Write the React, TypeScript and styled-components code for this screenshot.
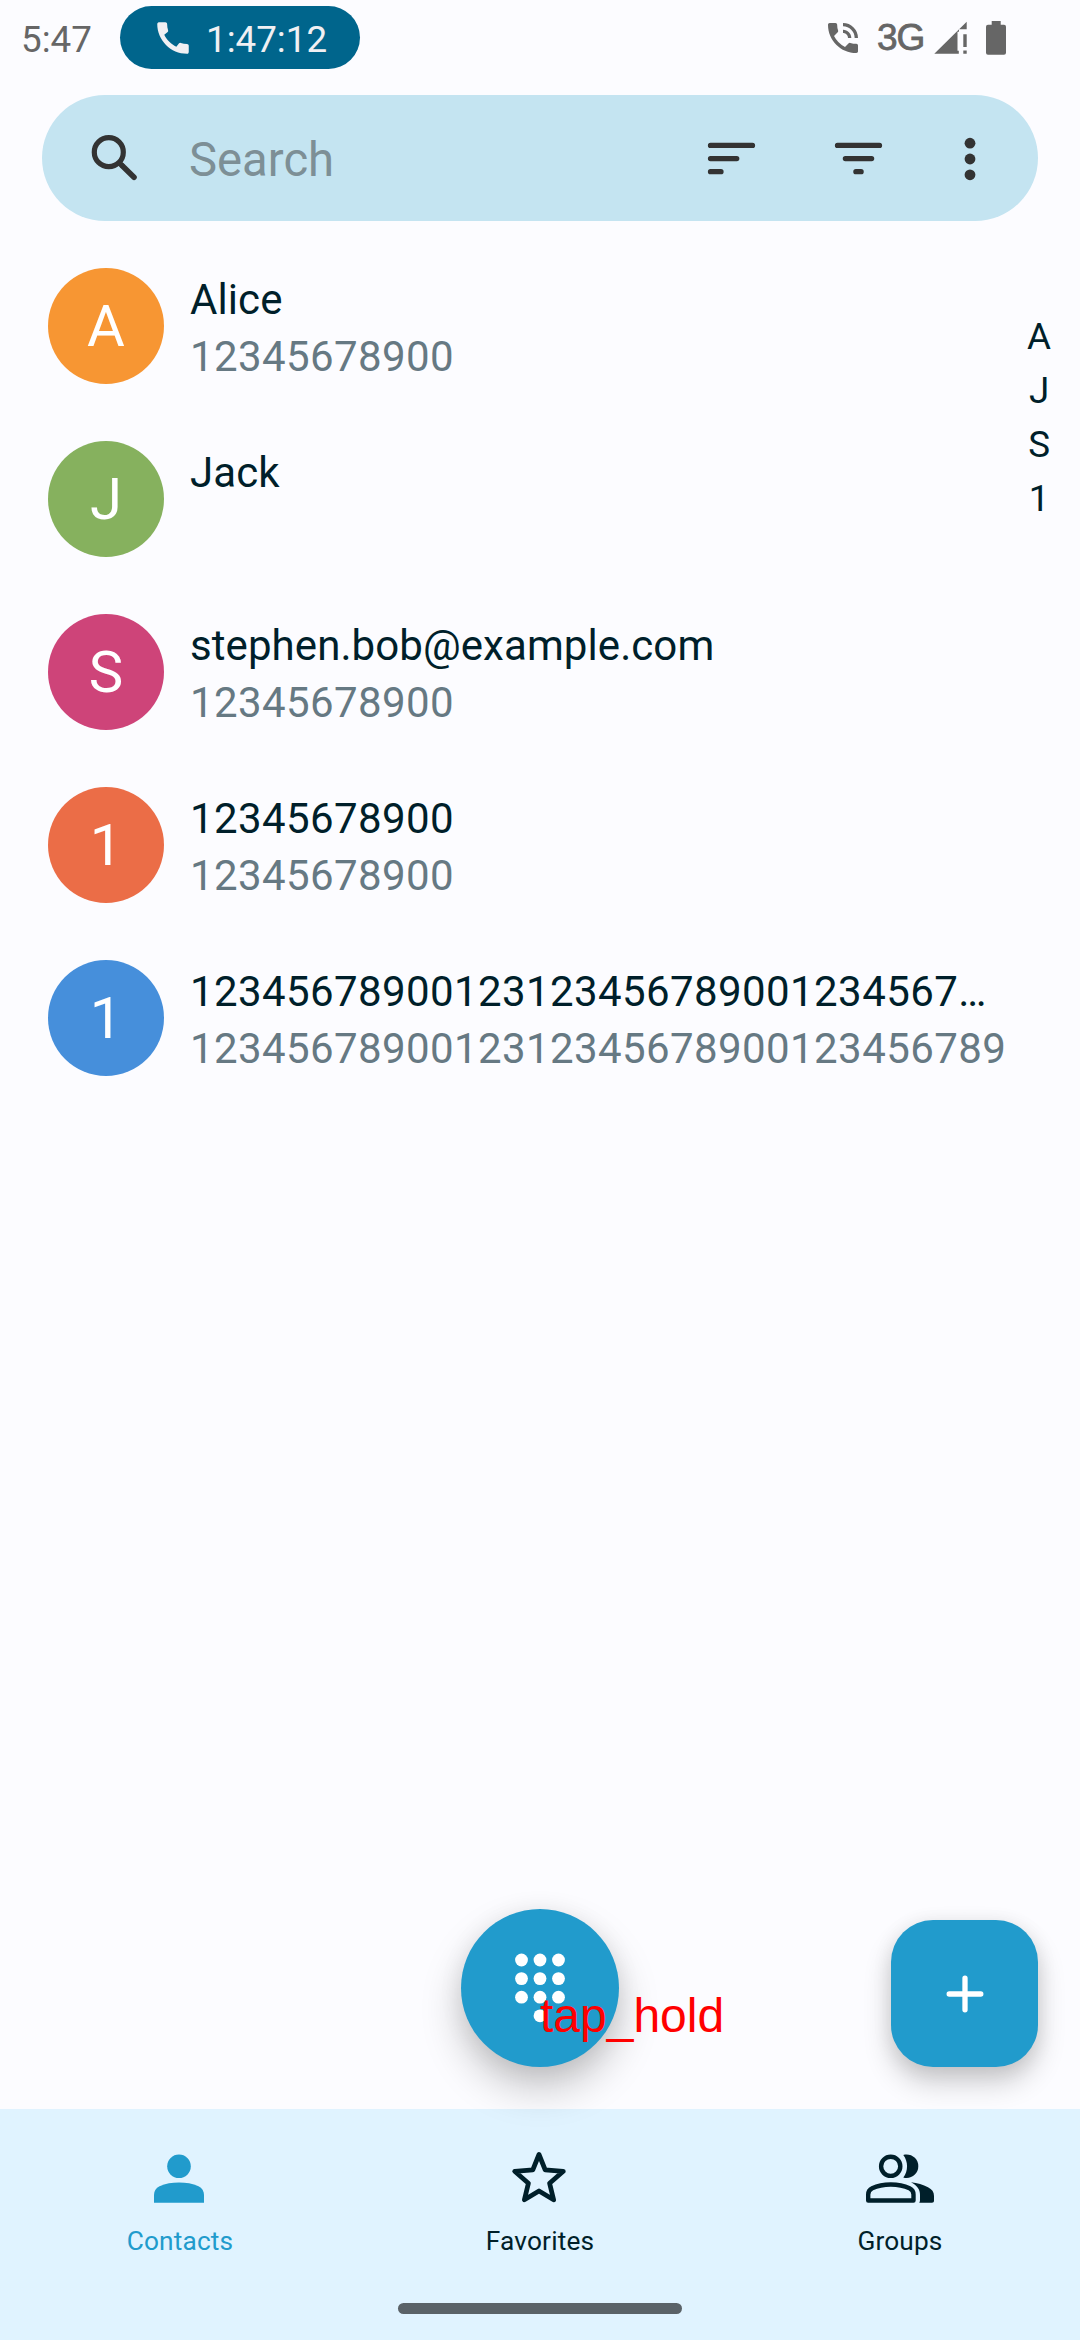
import React from 'react';
import styled, { createGlobalStyle } from 'styled-components';
import { MdCall, MdPhoneInTalk } from 'react-icons/md';

const color = {
  page: '#fcfcff',
  primary: '#219bcc',
  chip: '#00658c',
  search: '#c4e4f1',
  nav: '#e0f3ff',
  text: '#001f2a',
  muted: '#667983',
  icon: '#333333',
  status: '#666666',
};

const GlobalStyle = createGlobalStyle`
  * { box-sizing: border-box; }
  html, body { margin: 0; padding: 0; background: ${color.page}; }
  body { font-family: Roboto, "Noto Sans", sans-serif; color: ${color.text}; }
  svg { display: block; flex: none; }
`;

const Screen = styled.div`
  position: relative;
  width: 1080px;
  height: 2340px;
  overflow: hidden;
  display: flex;
  flex-direction: column;
  background: ${color.page};
`;

const StatusBar = styled.header`
  height: 95px;
  flex: none;
  display: flex;
  align-items: flex-start;
  justify-content: space-between;
  padding: 6px 74px 0 21px;
  color: ${color.status};
  font-size: 36.75px;
  line-height: 63px;
`;

const StatusLeft = styled.div`
  display: flex;
`;

const Clock = styled.span`
  width: 99px;
  padding-top: 2px;
`;

const CallChip = styled.div`
  width: 240px;
  height: 63px;
  border-radius: 32px;
  display: flex;
  align-items: center;
  gap: 12px;
  padding-left: 32px;
  background: ${color.chip};
  color: #f0f0f3;
`;

const ChipTime = styled.span`
  padding-top: 3px;
`;

const StatusRight = styled.div`
  height: 63px;
  display: flex;
  align-items: center;
`;

const NetworkType = styled.span`
  width: 57px;
  margin-left: 14px;
  font-family: "Liberation Sans", Arial, sans-serif;
  font-size: 37px;
  letter-spacing: -1px;
  -webkit-text-stroke: 0.8px ${color.status};
`;

const SignalGroup = styled.div`
  display: flex;
  gap: 18px;
`;

const SearchBar = styled.div`
  height: 126px;
  flex: none;
  margin: 0 42px;
  padding: 0 52px 0 42px;
  border-radius: 63px;
  display: flex;
  align-items: center;
  background: ${color.search};
`;

const SearchHint = styled.span`
  flex: 1;
  padding: 5px 0 0 42px;
  font-size: 47.25px;
  line-height: 63px;
  color: #7d8f96;
`;

const Actions = styled.div`
  display: flex;
  gap: 64px;
`;

const Content = styled.main`
  flex: 1;
  display: flex;
  justify-content: space-between;
  padding-top: 18px;
`;

const ContactList = styled.ul`
  list-style: none;
  margin: 0;
  padding: 0;
`;

const ContactRow = styled.li`
  height: 173px;
  display: flex;
  align-items: flex-start;
  gap: 26px;
  padding: 29px 0 0 48px;
`;

const Avatar = styled.div<{ $tone: string }>`
  width: 116px;
  height: 116px;
  border-radius: 50%;
  background: ${(p) => p.$tone};
  color: #fff;
  font-size: 58px;
  line-height: 116px;
  text-align: center;
`;

const Lines = styled.div`
  display: flex;
  flex-direction: column;
  padding-top: 3px;
  font-size: 42px;
  line-height: 57px;
  letter-spacing: 0.4px;
  white-space: nowrap;
`;

const Name = styled.span<{ $numeric: boolean }>`
  letter-spacing: ${(p) => (p.$numeric ? '0.4px' : '0.08px')};
`;

const Phone = styled.span`
  color: ${color.muted};
`;

const LetterIndex = styled.nav`
  width: 84px;
  padding: 71px 8px 0 0;
  display: flex;
  flex-direction: column;
  font-size: 36.75px;
  line-height: 54px;
  text-align: center;
`;

const BottomNav = styled.nav`
  height: 231px;
  flex: none;
  display: flex;
  flex-direction: column;
  align-items: center;
  justify-content: space-between;
  padding: 39px 0 26px;
  background: ${color.nav};
`;

const Tabs = styled.div`
  width: 100%;
  display: grid;
  grid-template-columns: repeat(3, 1fr);
`;

const Tab = styled.div<{ $active?: boolean }>`
  display: flex;
  flex-direction: column;
  align-items: center;
  gap: 17px;
  font-size: 26.25px;
  line-height: 32px;
  letter-spacing: 0.15px;
  color: ${(p) => (p.$active ? color.primary : color.text)};
`;

const HomeHandle = styled.div`
  width: 284px;
  height: 11px;
  border-radius: 6px;
  background: #5a6268;
`;

const Fab = styled.button`
  position: absolute;
  border: 0;
  padding: 0;
  display: flex;
  align-items: center;
  justify-content: center;
  background: ${color.primary};
  color: #fff;
`;

const DialFab = styled(Fab)`
  left: 461px;
  top: 1909px;
  width: 158px;
  height: 158px;
  border-radius: 50%;
  box-shadow: 0 21px 40px rgba(0, 0, 0, 0.22), 0 4px 24px rgba(0, 0, 0, 0.08);
`;

const AddFab = styled(Fab)`
  right: 42px;
  top: 1920px;
  width: 147px;
  height: 147px;
  border-radius: 42px;
  box-shadow: 0 16px 28px rgba(0, 0, 0, 0.19), 0 3px 20px rgba(0, 0, 0, 0.09);
`;

const GestureLabel = styled.span`
  position: absolute;
  left: 540px;
  top: 1989px;
  font-family: "Liberation Sans", Arial, sans-serif;
  font-size: 48px;
  line-height: 54px;
  color: #ff0000;
`;

const contacts = [
  { initial: 'A', name: 'Alice', phone: '12345678900', tone: '#f79633' },
  { initial: 'J', name: 'Jack', phone: '', tone: '#86b15e' },
  { initial: 'S', name: 'stephen.bob@example.com', phone: '12345678900', tone: '#ce4479' },
  { initial: '1', name: '12345678900', phone: '12345678900', tone: '#eb6d47' },
  {
    initial: '1',
    name: '12345678900123123456789001234567…',
    phone: '1234567890012312345678900123456789',
    tone: '#468fdb',
  },
];

const SignalIcon = () => (
  <svg width="34" height="34" viewBox="0 0 34 34" fill="currentColor">
    <path d="M.3 32.7 32.7.7v7.6H25v2.5h-1.5v19h1.3v2.9z" />
    <path d="M29.3 13.3h3.4V26h-3.4zM29.3 29.5h3.4v3.2h-3.4z" />
  </svg>
);

const BatteryIcon = () => (
  <svg width="20" height="34" viewBox="0 0 20 34" fill="currentColor">
    <path d="M5.7 0h9v3.7H18a2 2 0 0 1 2 2v26a2 2 0 0 1-2 2H2a2 2 0 0 1-2-2v-26a2 2 0 0 1 2-2h3.7z" />
  </svg>
);

const SearchIcon = () => (
  <svg width="63" height="63" viewBox="0 0 63 63" fill="none" stroke={color.icon}>
    <circle cx="24.8" cy="25.2" r="14.5" strokeWidth="5.2" />
    <path d="M38 38.5 50 50.2" strokeWidth="5.6" strokeLinecap="round" />
    <path d="M34.5 35 39 39.5" strokeWidth="5" />
  </svg>
);

const LineIcon = ({ d }: { d: string }) => (
  <svg width="63" height="63" viewBox="0 0 24 24" fill="none" stroke={color.icon} strokeWidth="2" strokeLinecap="round">
    <path d={d} />
  </svg>
);

const MoreIcon = () => (
  <svg width="32" height="63" viewBox="0 0 32 63" fill={color.icon}>
    {[16.2, 32, 47.8].map((cy) => (
      <circle key={cy} cx="16" cy={cy} r="5.4" />
    ))}
  </svg>
);

const DialpadIcon = () => (
  <svg width="52" height="70" viewBox="0 0 52 70" fill="currentColor">
    {[7, 25.6, 44.2].map((cy) =>
      [7.5, 26, 44.5].map((cx) => <circle key={`${cx}-${cy}`} cx={cx} cy={cy} r="6.4" />)
    )}
    <circle cx="26" cy="62.8" r="6.4" />
  </svg>
);

const PlusIcon = () => (
  <svg width="38" height="38" viewBox="0 0 38 38" stroke="currentColor" strokeWidth="5.3" strokeLinecap="round">
    <path d="M19 3.2v31.6M3.2 19h31.6" />
  </svg>
);

const PersonIcon = () => (
  <svg width="70" height="60" viewBox="0 0 70 60" fill="currentColor">
    <circle cx="34" cy="18.3" r="11.8" />
    <path d="M9 54.7V47c0-4 2-7 5.5-8.7 6-2.8 12.5-3.8 19.5-3.8s13.5 1 19.5 3.8C57 40 59 43 59 47v7.7z" />
  </svg>
);

const StarIcon = () => (
  <svg width="70" height="60" viewBox="0 0 70 60" fill="none" stroke="currentColor" strokeWidth="4.8" strokeLinejoin="round">
    <path d="M34 6.5 40.2 21.8 58.3 23.3 44.6 35.2 48.6 51.8 34 43 19.4 51.8 23.4 35.2 9.7 23.3 27.8 21.8z" />
  </svg>
);

const GroupIcon = () => (
  <svg width="70" height="60" viewBox="0 0 70 60" fill="currentColor">
    <g fill="none" stroke="currentColor" strokeWidth="4.4" strokeLinejoin="round">
      <circle cx="25.7" cy="18.3" r="9.6" />
      <path d="M3.2 52.5v-6c0-3 1.5-5 4-6.2C13 37.5 19 36.5 25.8 36.5s12.8 1 18.7 3.8c2.5 1.2 4 3.2 4 6.2v6z" />
    </g>
    <path d="M38.3 6.9c1.2-.4 2-.5 3.2-.5a11.8 11.8 0 0 1 0 23.6c-1.2 0-2-.1-3.2-.5 5-6.5 5-16 0-22.6z" />
    <path d="M46 34.3c6.5.8 12 2.4 17 5 4 2 6 4.7 6 8.8v4.6c0 1.3-.7 2-2 2H54.2c.8-1.2.8-2 .8-3.5V47c0-5.5-3-9.5-9-12.7z" />
  </svg>
);

export default function App() {
  return (
    <>
      <GlobalStyle />
      <Screen>
        <StatusBar>
          <StatusLeft>
            <Clock>5:47</Clock>
            <CallChip>
              <MdCall size={42} />
              <ChipTime>1:47:12</ChipTime>
            </CallChip>
          </StatusLeft>
          <StatusRight>
            <MdPhoneInTalk size={40} />
            <NetworkType>3G</NetworkType>
            <SignalGroup>
              <SignalIcon />
              <BatteryIcon />
            </SignalGroup>
          </StatusRight>
        </StatusBar>

        <SearchBar>
          <SearchIcon />
          <SearchHint>Search</SearchHint>
          <Actions>
            <LineIcon d="M4 7h16M4 12h10M4 17h4" />
            <LineIcon d="M4 7h16M7 12h10M11 17h2" />
            <MoreIcon />
          </Actions>
        </SearchBar>

        <Content>
          <ContactList>
            {contacts.map((c, i) => (
              <ContactRow key={i}>
                <Avatar $tone={c.tone}>{c.initial}</Avatar>
                <Lines>
                  <Name $numeric={c.initial === '1'}>{c.name}</Name>
                  <Phone>{c.phone}</Phone>
                </Lines>
              </ContactRow>
            ))}
          </ContactList>
          <LetterIndex>
            {['A', 'J', 'S', '1'].map((l) => (
              <span key={l}>{l}</span>
            ))}
          </LetterIndex>
        </Content>

        <BottomNav>
          <Tabs>
            <Tab $active>
              <PersonIcon />
              Contacts
            </Tab>
            <Tab>
              <StarIcon />
              Favorites
            </Tab>
            <Tab>
              <GroupIcon />
              Groups
            </Tab>
          </Tabs>
          <HomeHandle />
        </BottomNav>

        <DialFab aria-label="Dialpad">
          <DialpadIcon />
        </DialFab>
        <AddFab aria-label="Add contact">
          <PlusIcon />
        </AddFab>
        <GestureLabel>tap_hold</GestureLabel>
      </Screen>
    </>
  );
}
